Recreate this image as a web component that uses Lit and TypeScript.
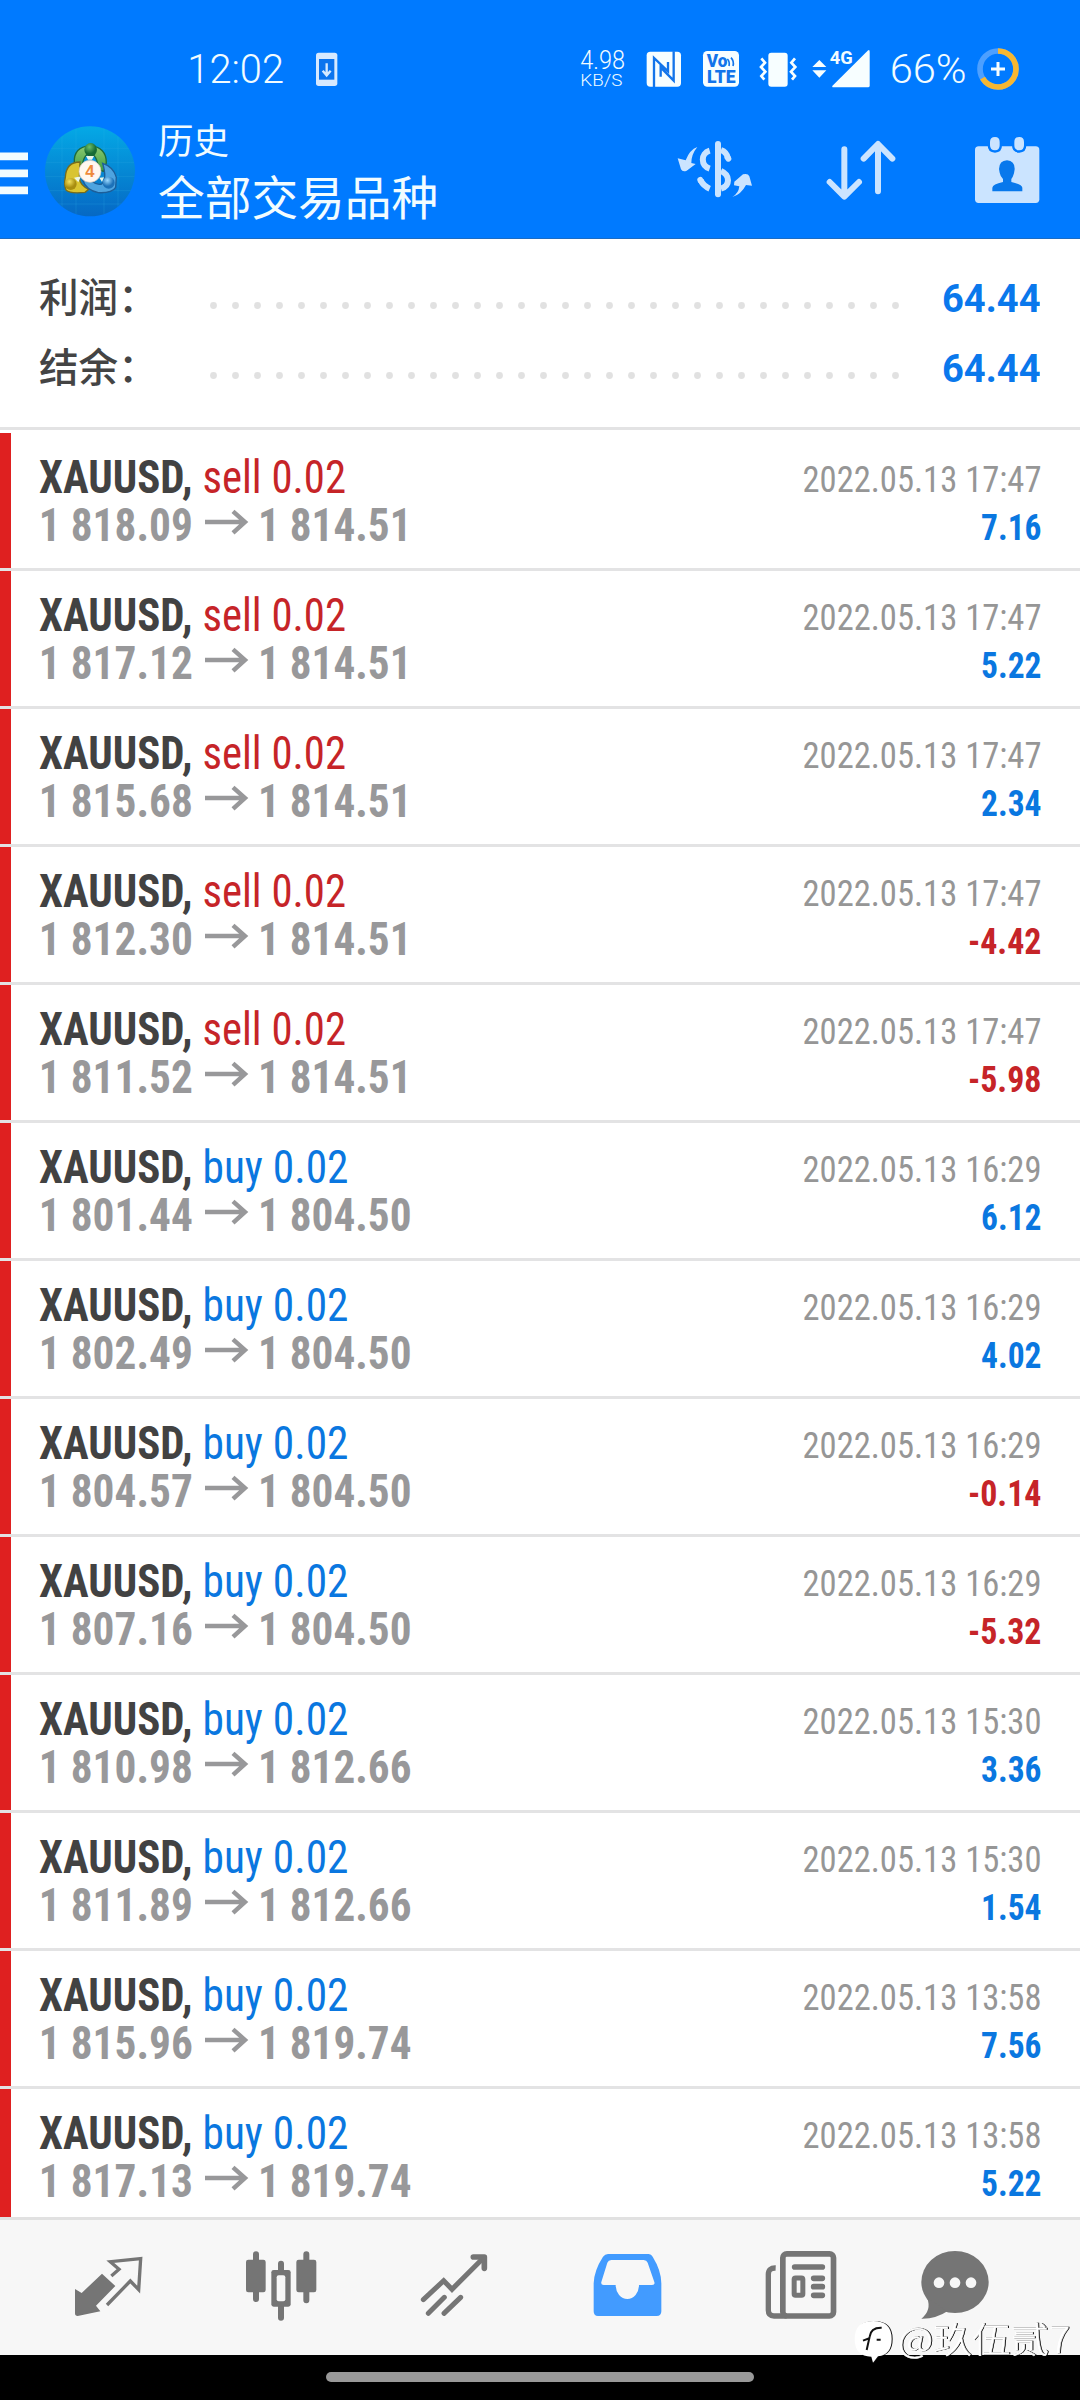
import { LitElement, html, css, svg, nothing, TemplateResult, SVGTemplateResult } from "lit";
import { customElement, property } from "lit/decorators.js";

type Deal = { side: "sell" | "buy"; open: string; close: string; time: string; profit: string };

const deal = (side: "sell" | "buy", open: string, close: string, hour: string, profit: string): Deal => ({
  side, open, close, time: `2022.05.13 ${hour}`, profit,
});

const DEALS: Deal[] = [
  deal("sell", "1 818.09", "1 814.51", "17:47", "7.16"),
  deal("sell", "1 817.12", "1 814.51", "17:47", "5.22"),
  deal("sell", "1 815.68", "1 814.51", "17:47", "2.34"),
  deal("sell", "1 812.30", "1 814.51", "17:47", "-4.42"),
  deal("sell", "1 811.52", "1 814.51", "17:47", "-5.98"),
  deal("buy", "1 801.44", "1 804.50", "16:29", "6.12"),
  deal("buy", "1 802.49", "1 804.50", "16:29", "4.02"),
  deal("buy", "1 804.57", "1 804.50", "16:29", "-0.14"),
  deal("buy", "1 807.16", "1 804.50", "16:29", "-5.32"),
  deal("buy", "1 810.98", "1 812.66", "15:30", "3.36"),
  deal("buy", "1 811.89", "1 812.66", "15:30", "1.54"),
  deal("buy", "1 815.96", "1 819.74", "13:58", "7.56"),
  deal("buy", "1 817.13", "1 819.74", "13:58", "5.22"),
];

// Icons are drawn on a grid of three units to one pixel.
const icon = (x: number, w: number, h: number, body: SVGTemplateResult, cls = ""): TemplateResult =>
  html`<svg class="icon ${cls}" width=${w} height=${h} viewBox="${x} 0 ${w * 3} ${h * 3}">${body}</svg>`;

const fit = (cls: string, x: number, y: number, len: number, text: string) =>
  svg`<text class=${cls} x=${x} y=${y} textLength=${len} lengthAdjust="spacingAndGlyphs">${text}</text>`;

@customElement("status-bar")
class StatusBar extends LitElement {
  static styles = css`
    :host { display: flex; height: 60px; padding-left: 185px; color: #f2fcff; }
    svg { display: block; flex: none; }
    text { font-family: Roboto, "Noto Sans", sans-serif; fill: #f2fcff; }
    .light { font-weight: 300; }
    .clock { font-size: 120px; }
    .speed { font-size: 80px; }
    .unit { font-size: 49px; }
    .badge { fill: #1274ea; font-weight: 900; font-size: 53px; }
    .net { font-size: 54px; font-weight: 700; }
    .notice { margin-right: 225px; }
  `;
  render() {
    return html`
      ${icon(0, 125, 60, svg`${fit("light clock", 7, 129, 290, "12:02")}`)}
      ${icon(0, 35, 60, svg`
        <rect x="18" y="38" width="64" height="100" rx="8" fill="#d6e9ff"/>
        <rect x="27" y="57" width="46" height="62" fill="#0c74ee"/>
        <path d="M50 70V104M38 92L50 106L62 92" stroke="#d6e9ff" stroke-width="7" fill="none"/>`, "notice")}
      ${icon(0, 65, 60, svg`
        ${fit("light speed", 31, 86, 134, "4.98")}
        ${fit("light unit", 31, 137, 126, "KB/S")}`)}
      ${icon(195, 55, 60, svg`
        <rect x="230" y="35" width="103" height="105" rx="11" fill="#f7feff"/>
        <path d="M252 141V54L294 94V66M272 110V82L311 122V34" fill="none" stroke="#1274ea" stroke-width="7"/>`)}
      ${icon(360, 60, 60, svg`
        <rect x="399" y="33" width="108" height="107" rx="13" fill="#f7feff"/>
        ${fit("badge", 410, 82, 62, "Vo")}
        ${fit("badge", 411, 130, 86, "LTE")}
        <path d="M472 57Q480 65 477 78M483 53Q493 64 489 78" fill="none" stroke="#1274ea" stroke-width="5"/>`)}
      ${icon(540, 55, 60, svg`
        <rect x="595" y="38" width="58" height="102" rx="9" fill="#f7feff"/>
        <path d="M574 55L585 68L573 81L586 95L574 108L583 119M675 55L664 68L676 81L663 95L675 108L666 119" fill="none" stroke="#f7feff" stroke-width="8"/>`)}
      ${icon(705, 75, 60, svg`
        <path d="M748 60L769 81H727ZM748 113L769 91H727Z" fill="#f7feff"/>
        ${fit("net", 779, 73, 69, "4G")}
        <path d="M893 32Q899 27 899 35V137Q899 142 894 142H791Q783 142 789 136Z" fill="#f7feff"/>`)}
      ${icon(930, 90, 60, svg`${fit("light clock", 959, 129, 231, "66%")}`)}
      ${icon(1200, 60, 60, svg`
        <circle cx="1284" cy="87" r="54" fill="none" stroke="#4da0ff" stroke-width="17"/>
        <circle cx="1284" cy="87" r="54" fill="none" stroke="#f7b731" stroke-width="17" stroke-dasharray="224 340" transform="rotate(-90 1284 87)"/>
        <path d="M1263 87H1305M1284 66V108" stroke="#f7feff" stroke-width="9"/>`)}
    `;
  }
}

@customElement("action-bar")
class ActionBar extends LitElement {
  static styles = css`
    :host { display: flex; height: 118px; padding-top: 20px; box-sizing: content-box; }
    svg { display: block; flex: none; }
    .titles { width: 509px; padding-left: 7px; box-sizing: border-box; color: #f2fcff;
      font-family: "Noto Sans CJK SC", sans-serif; white-space: nowrap; }
    .small { font-size: 35.5px; line-height: 40px; margin-top: -1px; }
    .large { font-size: 46.7px; line-height: 72px; }
    .four { font: 700 50px "Liberation Sans", sans-serif; fill: #ee8a3c; }
  `;
  render() {
    return html`
      ${icon(0, 36, 100, svg`<path d="M0 109H84M0 160H84M0 211H84" stroke="#f2fcff" stroke-width="23"/>`)}
      ${icon(18, 115, 100, svg`
        <defs>
          <linearGradient id="disc" x1="0" y1="0" x2="0" y2="1"><stop offset="0" stop-color="#04a9e6"/><stop offset=".5" stop-color="#0588d4"/><stop offset="1" stop-color="#0668c4"/></linearGradient>
          <linearGradient id="green" x1="0" y1="0" x2="0" y2="1"><stop offset="0" stop-color="#8ccb72"/><stop offset="1" stop-color="#3f9c42"/></linearGradient>
          <radialGradient id="gb" cx=".4" cy=".3"><stop offset="0" stop-color="#6fc06a"/><stop offset="1" stop-color="#176c35"/></radialGradient>
          <radialGradient id="yb" cx=".4" cy=".3"><stop offset="0" stop-color="#f3e15c"/><stop offset="1" stop-color="#a88d10"/></radialGradient>
          <radialGradient id="bb" cx=".4" cy=".3"><stop offset="0" stop-color="#9bd9ff"/><stop offset="1" stop-color="#1c71b8"/></radialGradient>
          <clipPath id="round"><circle cx="180" cy="154" r="135"/></clipPath>
        </defs>
        <circle cx="180" cy="154" r="135" fill="url(#disc)"/>
        <path clip-path="url(#round)" d="M96 20V288M138 10V308M222 10V308M264 20V288M40 85H320M40 127H320M40 170H320M40 212H320M40 252H320" stroke="#37b5e8" stroke-opacity=".2" stroke-width="3"/>
        <g transform="translate(0 -30)">
          <path d="M133 158Q130 112 180 107Q229 112 229 158L222 184L206 180Q202 134 180 130Q158 134 155 180Z" fill="url(#green)" stroke="#1f6b3b" stroke-width="4"/>
          <path d="M150 156Q108 156 106 202Q101 222 108 240Q120 252 165 247L176 238Q150 226 148 204Z" fill="#d9c431" stroke="#776c1c" stroke-width="4"/>
          <path d="M218 160Q250 170 259 202L257 232Q246 250 205 248Q168 240 158 210L186 214Q200 226 215 222Q232 206 218 160Z" fill="#4ea4e0" stroke="#1d5e99" stroke-width="4"/>
          <ellipse cx="182" cy="119" rx="19" ry="20" fill="url(#gb)"/>
          <circle cx="122" cy="222" r="18" fill="url(#yb)"/>
          <circle cx="236" cy="218" r="18" fill="url(#bb)"/>
          <path d="M168 138H192L186 149H174ZM132 203L153 199L145 217ZM208 203L222 202L216 216Z" fill="#eaf6e8"/>
          <circle cx="180" cy="184" r="33" fill="#fff7f0" stroke="#d6c9bd" stroke-width="2"/>
          <text class="four" x="166" y="202">4</text>
        </g>`)}
      <div class="titles"><div class="small">历史</div><div class="large">全部交易品种</div></div>
      ${icon(0, 140, 100, svg`
        <g fill="none" stroke="#cbe4ff" stroke-width="18">
          <path d="M174 72V223" stroke-linecap="round"/>
          <path d="M149 92C121 100 122 137 149 146M183 90Q200 96 204 115M183 153C211 165 211 198 183 206M122 181Q130 198 149 206"/>
          <path d="M203 113L205 116M121 180L122 182" stroke-linecap="round"/>
        </g>
        <path d="M112 81Q89 89 77 121L53 115L63 148Q68 157 80 152L107 132L94 129Q94 103 112 81ZM217 231Q236 220 238 199L222 196L223 185L249 163Q264 159 268 169L276 197L258 195Q243 224 217 231Z" fill="#cbe4ff"/>`)}
      ${icon(420, 140, 100, svg`
        <path d="M553 88V229M509 186L553 230L597 186M654 214V73M611 116L654 72L697 116" fill="none" stroke="#cbe4ff" stroke-width="18" stroke-linecap="round" stroke-linejoin="round"/>`)}
      ${icon(840, 120, 100, svg`
        <rect x="945" y="79" width="193" height="170" rx="11" fill="#cbe4ff"/>
        <path d="M990 66Q990 51 1005 51Q1019 51 1019 66V76Q1019 91 1005 91Q990 91 990 76ZM1063 66Q1063 51 1078 51Q1092 51 1092 66V76Q1092 91 1078 91Q1063 91 1063 76Z" fill="#cbe4ff" stroke="#007aff" stroke-width="14" paint-order="stroke"/>
        <path d="M1041 121Q1065 123 1064 148L1062 160Q1058 174 1054 177V186Q1086 193 1087 203V214H997V203Q998 193 1029 186V177Q1021 169 1019 158L1017 147Q1018 122 1041 121Z" fill="#0878ec"/>`)}
    `;
  }
}

@customElement("summary-line")
class SummaryLine extends LitElement {
  @property() label = "";
  @property() value = "";
  static styles = css`
    :host { display: flex; align-items: center; height: 70px; padding: 0 40px 0 39px; }
    .label { width: 163px; font: 500 39.6px/60px "Noto Sans CJK SC", sans-serif; color: #444; white-space: nowrap; margin-top: -4px; }
    .value { font: 700 38.4px Roboto, sans-serif; fill: #0a78ec; }
    svg { display: block; flex: none; }
  `;
  render() {
    return html`
      <div class="label">${this.label}</div>
      <svg width="838" height="70" viewBox="202 0 838 70">
        ${Array.from({ length: 32 }, (_, i) => svg`<circle cx=${213.5 + i * 22} cy="43.5" r="3.4" fill="#e1e1e1"/>`)}
        ${fit("value", 942, 50, 98.5, this.value)}
      </svg>`;
  }
}

@customElement("deal-row")
class DealRow extends LitElement {
  @property({ attribute: false }) deal!: Deal;
  static styles = css`
    :host { display: flex; height: 135px; border-bottom: 3px solid #e3e3e4; background: #fff; flex: none; }
    .mark { width: 11px; background: #df2020; }
    .main { flex: 1; padding-left: 28px; }
    svg { display: block; }
    text { font-family: "Roboto Condensed", Roboto, sans-serif; font-stretch: condensed; }
    .symbol { font-size: 45.5px; font-weight: 700; fill: #424242; }
    .side { font-size: 45.5px; }
    .sell { fill: #c62428; }
    .buy { fill: #0a77e0; }
    .price { font-size: 45.5px; font-weight: 700; fill: #98989a; }
    .time { font-size: 37.5px; fill: #969696; }
    .profit { font-size: 37px; font-weight: 700; }
  `;
  render() {
    const d = this.deal;
    if (!d) return nothing;
    const loss = d.profit.startsWith("-");
    return html`
      <div class="mark"></div>
      <div class="main">
        <svg width="400" height="135" viewBox="39 0 400 135">
          ${fit("symbol", 39, 59.5, 153.5, "XAUUSD,")}
          ${fit(`side ${d.side}`, 202.5, 59.5, d.side === "sell" ? 143.5 : 146, `${d.side} 0.02`)}
          ${fit("price", 38.8, 107.5, 154, d.open)}
          <path d="M205 89H245M233 78.300L245 89L233 99.800" fill="none" stroke="#98989a" stroke-width="4.4"/>
          ${fit("price", 258, 107.5, 153.5, d.close)}
        </svg>
      </div>
      <svg width="280" height="135" viewBox="800 0 280 135">
        ${fit("time", 802.5, 59.3, 239, d.time)}
        ${fit(`profit ${loss ? "sell" : "buy"}`, loss ? 968 : 981, 107, loss ? 73.5 : 60.5, d.profit)}
      </svg>`;
  }
}

@customElement("tab-bar")
class TabBar extends LitElement {
  static styles = css`
    :host { display: flex; height: 115px; padding: 20px 0 0 50px; border-top: 3px solid #e1e1e1; background: #f7f7f7; }
    svg { display: block; flex: none; fill: #757575; }
    .line { fill: none; stroke: #757575; }
  `;
  render() {
    return html`
      ${icon(0, 120, 100, svg`
        <path d="M156 101L196 138L138 197L151 214L83 228Q75 228 75 220V147L95 159Z"/>
        <path class="line" stroke-width="10" d="M184 108L207 88L181 65L272 56L266 149L241 123L171 195"/>`)}
      ${icon(360, 160, 100, svg`
        <path class="line" stroke-width="18" stroke-linecap="round" d="M618 43V177M769 43V181M693 71V90M693 200V233"/>
        <rect x="588" y="59" width="59" height="98" rx="7"/><rect x="739" y="59" width="60" height="98" rx="7"/>
        <rect x="664" y="90" width="58" height="110" rx="7"/><rect x="680" y="106" width="26" height="78" rx="6" fill="#f7f7f7"/>`)}
      ${icon(840, 250, 100, svg`
        <path class="line" stroke-width="15" stroke-linecap="round" d="M1120 179L1181 122L1206 148L1300 54M1135 220L1183 172M1182 220L1232 172"/>
        <path class="line" stroke-width="17" stroke-linecap="round" stroke-linejoin="round" d="M1270 51H1303V85"/>`)}
      ${icon(0, 120, 100, svg`
        <path fill="#429bff" fill-rule="evenodd" d="M84 42H206Q214 42 218 50Q244 92 244 130V214Q244 228 230 228H54Q41 228 41 214V130Q42 92 69 50Q75 42 84 42ZM94 60Q85 60 82 68L64 126Q62 135 71 135H107A35 42 0 0 0 177 135H216Q226 135 223 126L203 68Q200 60 191 60Z"/>`)}
      ${icon(360, 180, 100, svg`
        <rect class="line" x="608.5" y="41.500" width="152" height="186.500" rx="12" stroke-width="17"/>
        <path class="line" stroke-width="16" d="M587 84Q565 83 565 103V211Q565 228 582 228H620"/>
        <path class="line" stroke-width="17" stroke-linecap="round" d="M644 81H727M701 115H727M701 140H727M701 166H727"/>
        <rect class="line" x="642.5" y="114" width="26" height="52" rx="4" stroke-width="15"/>`)}
      ${icon(900, 200, 100, svg`
        <ellipse cx="1125" cy="126" rx="101" ry="93"/>
        <path d="M1042 175Q1055 212 1024 236Q1068 237 1102 214Z"/>
        <g fill="#f7f7f7"><circle cx="1077" cy="128" r="16"/><circle cx="1125" cy="128" r="16"/><circle cx="1173" cy="128" r="16"/></g>`)}
    `;
  }
}

@customElement("app-root")
class AppRoot extends LitElement {
  static styles = css`
    :host { display: flex; flex-direction: column; width: 1080px; height: 2400px; position: relative; overflow: hidden; background: #fff; }
    .header { background: #007aff; padding-top: 40px; height: 239px; box-sizing: border-box; border-bottom: 1px solid #1b6cc4; flex: none; }
    .summary { height: 191px; box-sizing: border-box; padding-top: 23px; border-bottom: 3px solid #e3e3e4; flex: none; }
    .deals { height: 1784px; padding-top: 3px; display: flex; flex-direction: column; overflow: hidden; flex: none; }
    .gesture { flex: 1; background: #000; display: flex; justify-content: center; align-items: flex-start; padding-top: 17px; }
    .pill { width: 428px; height: 10px; border-radius: 5px; background: #999; }
    .mark { position: absolute; left: 850px; top: 2300px; filter: drop-shadow(1px 0.7px 0 #111); }
    .name { font: 300 106px "Noto Sans CJK SC", sans-serif; fill: #fff; stroke: #fff; stroke-width: 1.5px; }
  `;
  render() {
    return html`
      <div class="header"><status-bar></status-bar><action-bar></action-bar></div>
      <div class="summary">
        <summary-line label="利润：" value="64.44"></summary-line>
        <summary-line label="结余：" value="64.44"></summary-line>
      </div>
      <div class="deals">${DEALS.map((d) => html`<deal-row .deal=${d}></deal-row>`)}</div>
      <tab-bar></tab-bar>
      <div class="gesture"><div class="pill"></div></div>
      <svg class="mark" width="230" height="90" viewBox="810 180 690 270">
        <path d="M880 243Q935 243 935 297Q935 345 894 349L879 368L874 350Q824 349 824 297Q824 243 880 243Z" fill="#fff"/>
        <path d="M905 263Q872 262 869 290L860 330M849 302L870 294M890 299H902" fill="none" stroke="#111" stroke-width="6"/>
        <text class="name" x="954" y="338" textLength="516" lengthAdjust="spacingAndGlyphs">@玖伍贰7</text>
      </svg>`;
  }
}
